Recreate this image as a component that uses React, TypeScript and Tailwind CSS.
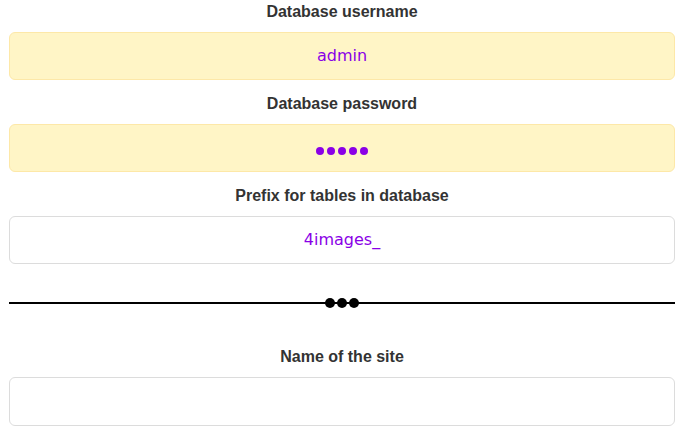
type Field = { label: string; value: string; filled: boolean; secret?: boolean };

function Label({ children }: { children: string }) {
  return <div className="h-6 leading-6 text-center text-[16px] font-bold text-[#333]">{children}</div>;
}

export default function App() {
  const fields: Field[] = [
    { label: "Database username", value: "admin", filled: true },
    { label: "Database password", value: "admin", filled: true, secret: true },
    { label: "Prefix for tables in database", value: "4images_", filled: false },
  ];

  return (
    <div className="w-[690px] bg-white font-['Liberation_Sans',Arial,sans-serif]">
      <div className="ml-[9px] w-[666px] flex flex-col">
        {fields.map((f, i) => (
          <div key={f.label} className={i > 0 ? "mt-3" : ""}>
            <Label>{f.label}</Label>
            <div
              className={
                "mt-2 flex items-center justify-center h-[48px] rounded-[6px] border text-[16px] text-[#8a00e6] font-['DejaVu_Sans',Verdana,sans-serif] " +
                (f.filled ? "bg-[#fff5c6] border-[#fde8a8]" : "bg-white border-[#dcdcdc]")
              }
            >
              {f.secret ? (
                <div className="flex gap-[3px] mt-[6px]">
                  {f.value.split("").map((_, j) => (
                    <span key={j} className="w-[8px] h-[8px] rounded-full bg-[#8a00e6]" />
                  ))}
                </div>
              ) : (
                <span>{f.value}</span>
              )}
            </div>
          </div>
        ))}

        {/* Divider */}
        <div className="mt-[38px] relative h-[2px] bg-black">
          <div className="absolute left-1/2 top-1/2 -translate-x-1/2 -translate-y-1/2 flex gap-[2px]">
            <span className="w-[10px] h-[10px] rounded-full bg-black" />
            <span className="w-[10px] h-[10px] rounded-full bg-black" />
            <span className="w-[10px] h-[10px] rounded-full bg-black" />
          </div>
        </div>

        <div className="mt-[41px]">
          <Label>Name of the site</Label>
          <div className="mt-2 h-[49px] rounded-[6px] border border-[#dcdcdc] bg-white" />
        </div>
      </div>
    </div>
  );
}
